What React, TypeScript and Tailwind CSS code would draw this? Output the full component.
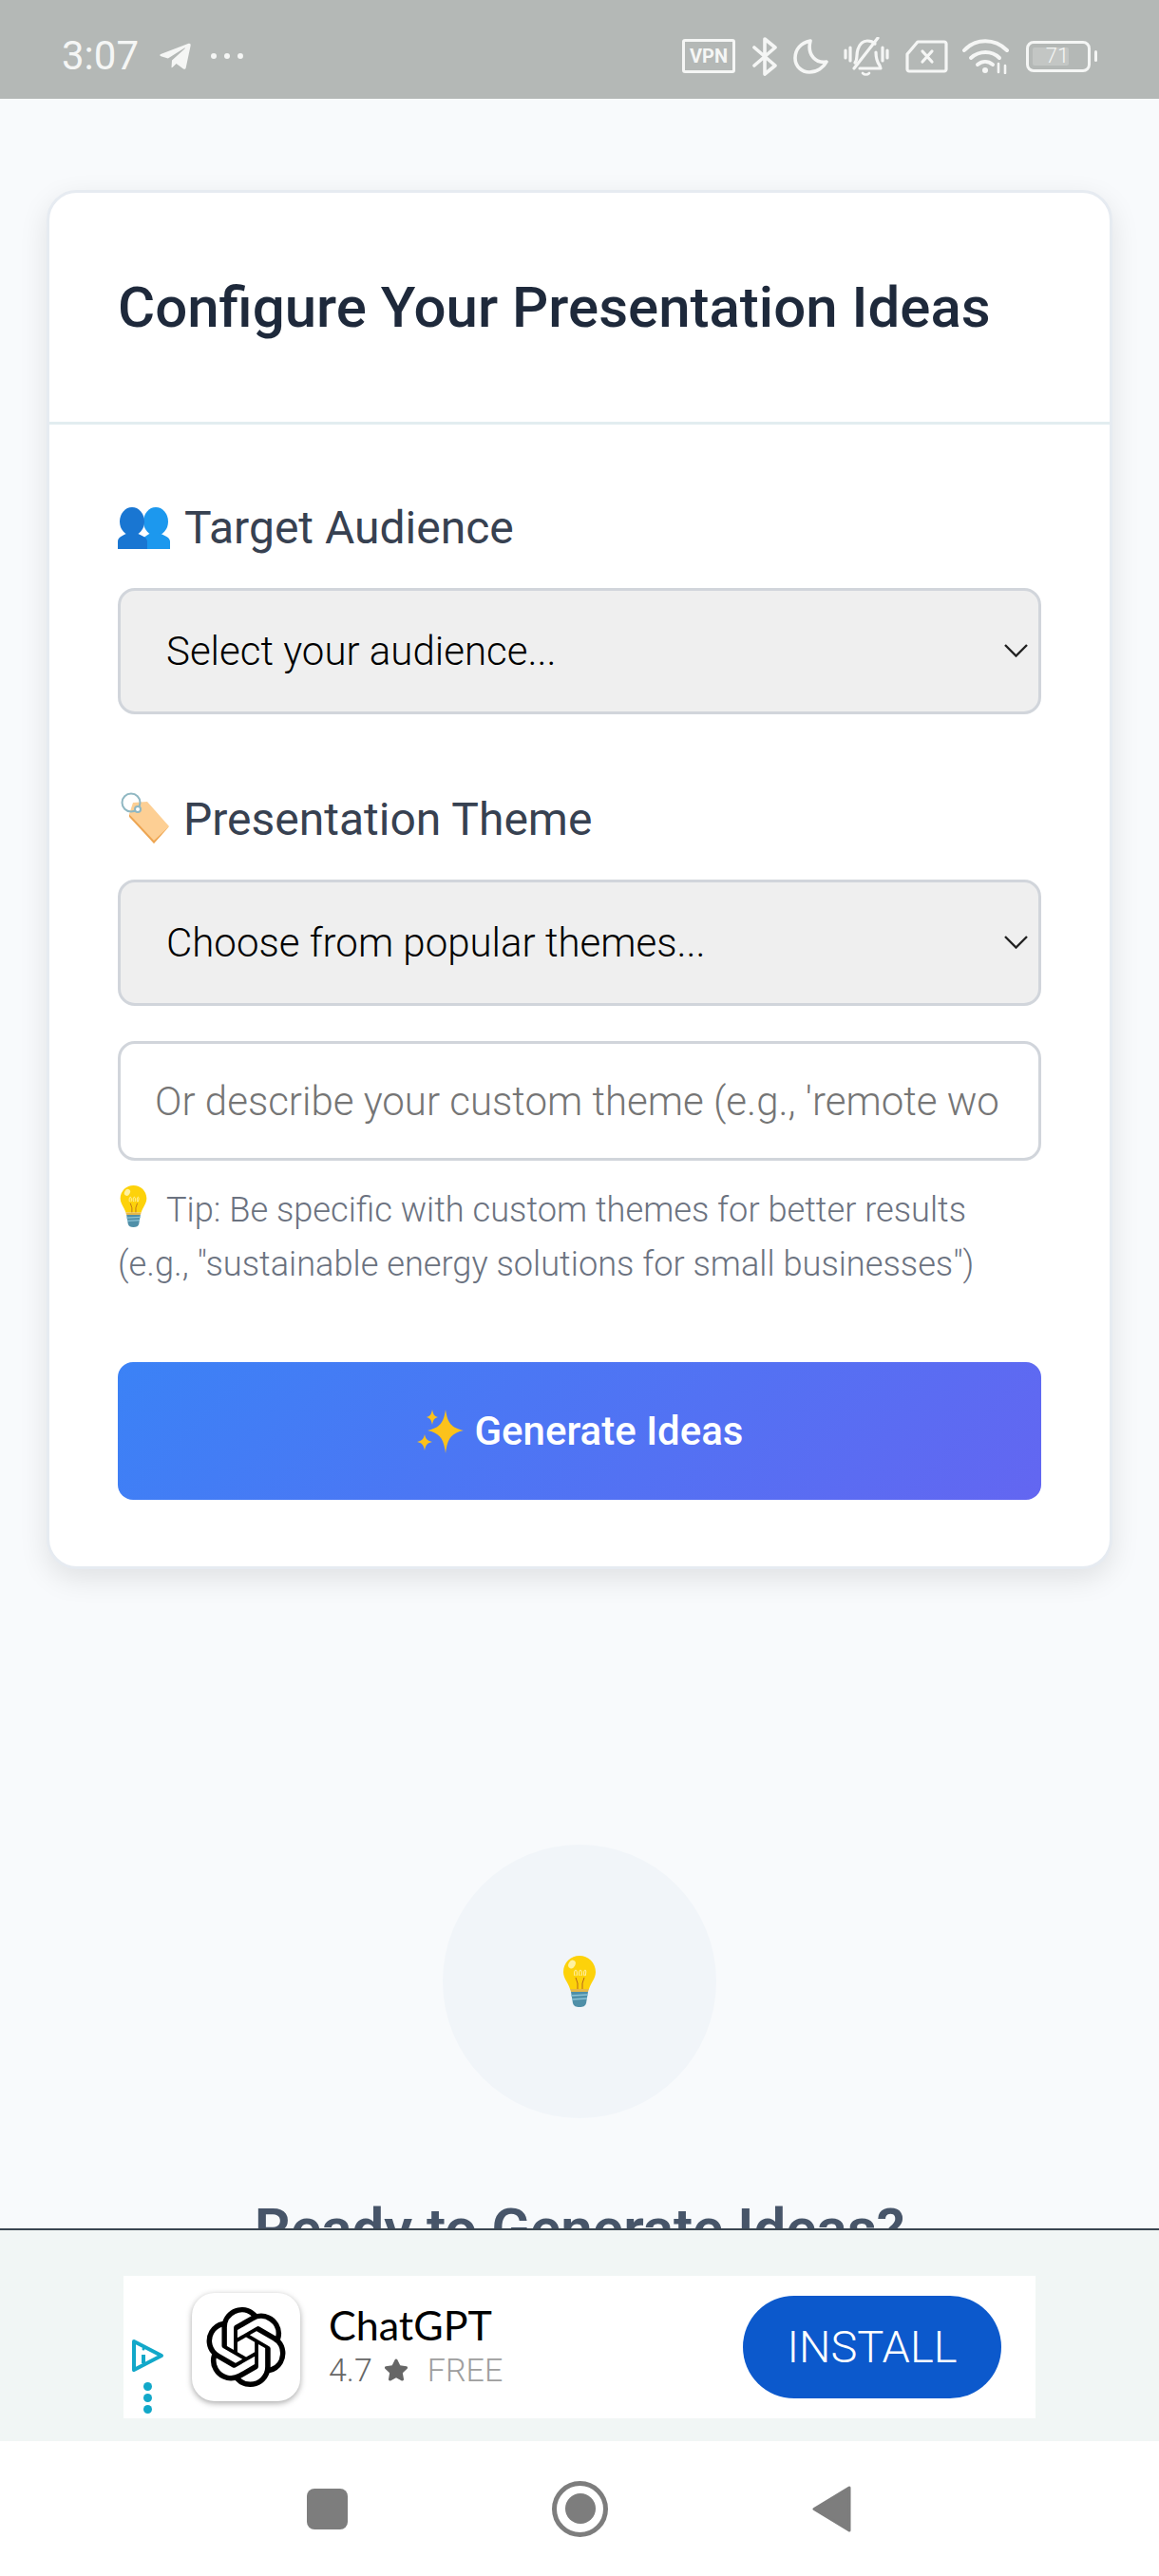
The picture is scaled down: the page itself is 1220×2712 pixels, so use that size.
import React from 'react';
import { FaTelegramPlane, FaStar } from 'react-icons/fa';
import { SiOpenai } from 'react-icons/si';

const StatusIcons: React.FC = () => (
  <div className="flex items-center text-[#f5f6f5]">
    {/* vpn */}
    <div className="mr-[18px] flex h-[36px] w-[56px] items-center justify-center rounded-[3px] border-[3px] border-[#f5f6f5] text-[20px] font-bold leading-none">
      VPN
    </div>
    {/* bluetooth */}
    <svg className="mr-[17px]" width="26" height="41" viewBox="0 0 26 41" fill="none" stroke="currentColor" strokeWidth="3.6" strokeLinecap="round" strokeLinejoin="round">
      <path d="M2 11l22 19-11 9V2l11 9L2 30" />
    </svg>
    {/* moon */}
    <svg className="mr-[16px]" width="37" height="37" viewBox="0 0 37 37" fill="none" stroke="currentColor" strokeWidth="3.6" strokeLinejoin="round">
      <path d="M18 2C8 4 2 11 2 20c0 9 7 15 15 15 8 0 15-5 18-11-10 2-21-6-17-22z" />
    </svg>
    {/* silent bell */}
    <svg className="mr-[17px]" width="48" height="41" viewBox="0 0 48 41" fill="none" stroke="currentColor" strokeWidth="3.2" strokeLinecap="round" strokeLinejoin="round">
      <path d="M12 27c3-3 1-8 3-14 2-6 6-9 10-9 3 0 6 1 8 3" />
      <path d="M36 1L11 33" />
      <path d="M34 16c0 6 1 10 4 14l1 3H17" />
      <path d="M20 38c2 2 5 2 7 0" strokeWidth="2.6" />
      <path d="M2 14v8M7 11v14M41 11v14M46 14v8" />
    </svg>
    {/* no sim */}
    <svg className="mr-[15px]" width="45" height="35" viewBox="0 0 45 35" fill="none" stroke="currentColor" strokeWidth="3.2" strokeLinejoin="round" strokeLinecap="round">
      <path d="M2 15L13 2h28c1 0 2 1 2 2v27c0 1-1 2-2 2H4c-1 0-2-1-2-2z" />
      <path d="M18 12l10 11M28 12L18 23" />
    </svg>
    {/* wifi */}
    <svg className="mr-[17px]" width="50" height="38" viewBox="0 0 50 38" fill="none" stroke="currentColor" strokeWidth="4" strokeLinecap="round">
      <path d="M2 13C14 0 34 0 47 13" />
      <path d="M9 21c9-8 22-8 30 0" />
      <path d="M16 28c5-4 11-4 16 0" />
      <circle cx="24" cy="34" r="3" fill="currentColor" stroke="none" />
      <path d="M38 27v9M45 29v8" strokeWidth="2.6" />
    </svg>
    {/* battery */}
    <div className="relative flex h-[33px] w-[68px] items-center rounded-[8px] border-[3px] border-[#f5f6f5] p-[4px]">
      <div className="h-full w-[71%] rounded-[2px] bg-white/20" />
      <span className="absolute inset-0 flex items-center justify-center pr-[2px] text-[22px] font-light leading-none">71</span>
    </div>
    <div className="ml-[4px] h-[12px] w-[3px] rounded-full bg-[#f5f6f5]" />
  </div>
);

const PeopleEmoji: React.FC = () => (
  <svg width="55" height="44" viewBox="0 0 55 44" className="shrink-0">
    <ellipse cx="40" cy="15" rx="13" ry="15" fill="#1c98ee" />
    <path d="M26 44V36c0-5 6-7 9-9h8c4 2 12 4 12 9v8z" fill="#1c98ee" />
    <ellipse cx="15" cy="15" rx="13" ry="15" fill="#1976d2" />
    <path d="M0 44V36c0-5 7-7 11-9h8c4 2 12 4 12 9v8z" fill="#1976d2" />
  </svg>
);

const TagEmoji: React.FC = () => (
  <svg width="56" height="60" viewBox="0 0 56 60" className="-mt-[6px] shrink-0">
    <path d="M12 27l4-12 15-1 23 26-16 18z" fill="#fdcf94" />
    <path d="M12 27v3l26 28 16-18-16 15z" fill="#eda552" />
    <circle cx="14" cy="15" r="9.5" fill="none" stroke="#8fb7c2" strokeWidth="2" />
    <circle cx="21" cy="22" r="3" fill="#fff" stroke="#8fb7c2" strokeWidth="2" />
  </svg>
);

const BulbEmoji: React.FC<{ width: number; height: number }> = ({ width, height }) => (
  <svg width={width} height={height} viewBox="0 0 34 54" className="shrink-0">
    <path d="M17 0C8 0 0 7 0 17c0 7 5 11 7 18h20c2-7 7-11 7-18C34 7 26 0 17 0z" fill="#fdd20a" />
    <ellipse cx="9" cy="9" rx="3.5" ry="4.5" fill="#fff2a0" transform="rotate(30 9 9)" />
    <path d="M12 21c-1-3 0-6 1-6s2 3 1 6M17 21c-1-3 0-6 1-6s2 3 1 6M22 21c-1-3 0-6 1-6s1 3 0 6" fill="none" stroke="#fff5c0" strokeWidth="1" />
    <path d="M13 23l2 6v6M22 23l-2 6v6" fill="none" stroke="#b5651d" strokeWidth="1" />
    <path d="M7 35h20l-1 3H8z" fill="#e6b84a" />
    <path d="M8 38h18l-2 12c-1 3-3 4-7 4s-6-1-7-4z" fill="#4f8fa8" />
    <path d="M8 42l18-1M9 46l16-1" stroke="#8cc3d6" strokeWidth="1.5" />
  </svg>
);

const SparklesEmoji: React.FC = () => (
  <svg width="50" height="46" viewBox="0 0 50 46" className="shrink-0">
    <path d="M31 0c2 14 6 19 19 22-13 3-17 8-19 24-2-16-6-21-19-24 13-3 17-8 19-22z" fill="#fcc21b" />
    <path d="M17 0c1 5 2 7 6 8-4 1-5 3-6 8-1-5-2-7-6-8 4-1 5-3 6-8z" fill="#fcc21b" />
    <path d="M9 26c1 5 3 7 8 8-5 1-7 3-8 9-1-6-3-8-8-9 5-1 7-3 8-8z" fill="#fcc21b" />
  </svg>
);

const Chevron: React.FC = () => (
  <svg className="absolute right-[14px] top-[59px]" width="25" height="14" viewBox="0 0 25 14" fill="none" stroke="#222" strokeWidth="2.4">
    <path d="M1 1l11.500 11.500L24 1" />
  </svg>
);

const App: React.FC = () => {
  return (
    <div className="flex h-[2712px] w-[1220px] flex-col overflow-hidden bg-white font-['Roboto',sans-serif]">
      {/* status bar */}
      <div className="flex h-[104px] shrink-0 items-center justify-between bg-[#b4b8b6] pl-[65px] pr-[65px] pt-[14px] text-[#f5f6f5]">
        <div className="flex items-center">
          <span className="text-[42px] font-normal leading-none">3:07</span>
          <FaTelegramPlane className="ml-[20px] text-[37px]" />
          <div className="ml-[19px] flex gap-[8px]">
            <div className="h-[6px] w-[6px] rounded-full bg-[#f5f6f5]" />
            <div className="h-[6px] w-[6px] rounded-full bg-[#f5f6f5]" />
            <div className="h-[6px] w-[6px] rounded-full bg-[#f5f6f5]" />
          </div>
        </div>
        <StatusIcons />
      </div>

      {/* page */}
      <div className="min-h-0 flex-1 overflow-hidden bg-[#f8fafc] px-[49px] pt-[96px]">
        <div className="rounded-[32px] border-[3px] border-[#e6ebf1] bg-white shadow-[0_10px_30px_rgba(0,0,0,0.1)]">
          <div className="flex h-[244px] items-center border-b-[3px] border-[#e2edf0] pl-[72px]">
            <h2 className="text-[60px] font-medium leading-none text-[#1e293b]">Configure Your Presentation Ideas</h2>
          </div>

          <div className="px-[72px] pb-[70px] pt-[79px]">
            <label className="mb-[33px] flex h-[60px] items-center gap-[15px] text-[48px] font-normal text-[#374151]">
              <PeopleEmoji />
              Target Audience
            </label>
            <div className="relative mb-[81px]">
              <select className="h-[133px] w-full appearance-none rounded-[18px] border-[3px] border-[#d1d5db] bg-[#efefef] pl-[48px] text-[42px] font-light text-black">
                <option>Select your audience...</option>
              </select>
              <Chevron />
            </div>

            <label className="mb-[33px] flex h-[60px] items-center gap-[13px] text-[48px] font-normal text-[#374151]">
              <TagEmoji />
              Presentation Theme
            </label>
            <div className="relative mb-[37px]">
              <select className="h-[133px] w-full appearance-none rounded-[18px] border-[3px] border-[#d1d5db] bg-[#efefef] pl-[48px] text-[42px] font-light text-black">
                <option>Choose from popular themes...</option>
              </select>
              <Chevron />
            </div>

            <input
              className="h-[126px] w-full rounded-[18px] border-[3px] border-[#d1d5db] bg-white pl-[36px] pr-[40px] text-[42px] font-light text-black placeholder:text-[#757575]"
              placeholder="Or describe your custom theme (e.g., 'remote work productivity')"
            />

            <p className="mt-[23px] text-[36.2px] font-light leading-[57px] text-[#6b7280]">
              <span className="mr-[18px] inline-block align-[-6px]">
                <BulbEmoji width={33} height={44} />
              </span>
              Tip: Be specific with custom themes for better results
              <br />
              (e.g., "sustainable energy solutions for small businesses")
            </p>

            <button className="mt-[75px] flex h-[145px] w-full items-center justify-center gap-[12px] rounded-[16px] bg-[linear-gradient(135deg,#3b82f6,#6366f1)] text-[42px] font-medium text-white">
              <SparklesEmoji />
              Generate Ideas
            </button>
          </div>
        </div>

        {/* empty state */}
        <div className="mt-[290px] flex flex-col items-center">
          <div className="flex h-[288px] w-[288px] items-center justify-center rounded-full bg-[#f1f5f9]">
            <BulbEmoji width={34} height={54} />
          </div>
          <h3 className="mt-[87px] text-[60px] font-semibold leading-none text-[#475569]">Ready to Generate Ideas?</h3>
        </div>
      </div>

      {/* ad banner */}
      <div className="shrink-0 border-t-[2px] border-[#3a4550] bg-[#f1f6f5] pb-[24px] pt-[48px]">
        <div className="mx-[130px] flex h-[150px] w-[960px] items-center bg-white">
          <div className="ml-[8px] flex w-[35px] shrink-0 flex-col items-center pt-[60px]">
            <svg width="35" height="36" viewBox="0 0 35 36" fill="none" stroke="#12a8c9" strokeWidth="4" strokeLinejoin="round">
              <path d="M3 3l29 15L3 33z" />
              <path d="M13 17v9" />
              <circle cx="13" cy="11" r="1.5" fill="#12a8c9" stroke="none" />
            </svg>
            <div className="mt-[10px] flex flex-col gap-[3px]">
              <div className="h-[9px] w-[9px] rounded-full bg-[#12a8c9]" />
              <div className="h-[9px] w-[9px] rounded-full bg-[#12a8c9]" />
              <div className="h-[9px] w-[9px] rounded-full bg-[#12a8c9]" />
            </div>
          </div>
          <div className="ml-[29px] flex h-[114px] w-[114px] shrink-0 items-center justify-center rounded-[24px] bg-white shadow-[0_2px_6px_rgba(0,0,0,0.35)]">
            <SiOpenai className="text-[84px] text-black" />
          </div>
          <div className="-mt-[4px] ml-[30px] flex flex-col">
            <span className="font-['Lato',sans-serif] text-[43px] font-normal leading-[48px] text-black">ChatGPT</span>
            <div className="mt-[3px] flex items-center text-[34px] font-light leading-[40px]">
              <span className="text-[#666]">4.7</span>
              <FaStar className="ml-[12px] text-[26px] text-[#666]" />
              <span className="ml-[20px] text-[#9e9e9e]">FREE</span>
            </div>
          </div>
          <button className="ml-auto mr-[36px] flex h-[108px] w-[272px] items-center justify-center rounded-full bg-[#0c59cc] text-[47px] font-light text-white">
            INSTALL
          </button>
        </div>
      </div>

      {/* nav bar */}
      <div className="relative flex h-[142px] shrink-0 items-center bg-white">
        <div className="ml-[323px] h-[43px] w-[43px] rounded-[8px] bg-[#7d7d7d]" />
        <div className="ml-[215px] flex h-[59px] w-[59px] items-center justify-center rounded-full border-[5px] border-[#7d7d7d]">
          <div className="h-[32px] w-[32px] rounded-full bg-[#7d7d7d]" />
        </div>
        <svg className="ml-[215px]" width="41" height="49" viewBox="0 0 41 49" fill="#7d7d7d" stroke="#7d7d7d" strokeWidth="3" strokeLinejoin="round">
          <path d="M2 24.5L39 2v45z" />
        </svg>
      </div>
    </div>
  );
};

export default App;
